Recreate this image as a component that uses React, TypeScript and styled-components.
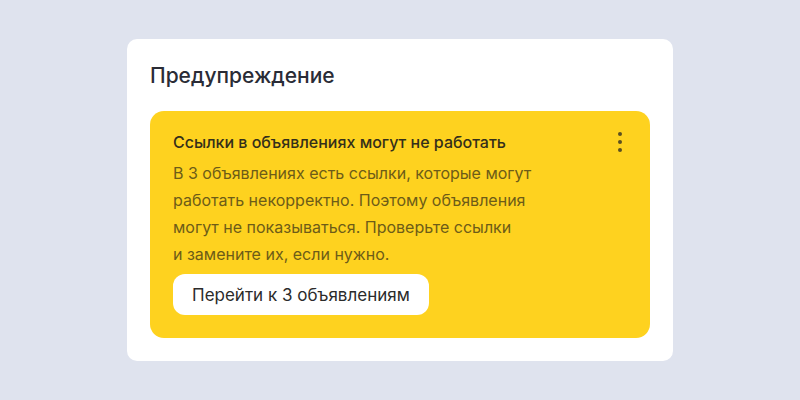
import styled, { createGlobalStyle } from 'styled-components';

const GlobalStyle = createGlobalStyle`
  html, body {
    margin: 0;
    padding: 0;
    background: #dfe3ee;
  }
  body {
    font-family: Inter, "Noto Sans", "Liberation Sans", sans-serif;
  }
`;

const Page = styled.div`
  height: 400px;
  display: flex;
  align-items: center;
  justify-content: center;
`;

const Card = styled.section`
  width: 546px;
  box-sizing: border-box;
  padding: 25px 23px 23px;
  background: #ffffff;
  border-radius: 10px;
`;

const Title = styled.h2`
  margin: 0 0 23px;
  font-size: 21px;
  line-height: 24px;
  font-weight: 500;
  color: #2a2c36;
`;

const Alert = styled.div`
  background: #fed21f;
  border-radius: 14px;
  padding: 19px 23px 23px;
`;

const AlertHead = styled.div`
  display: flex;
  align-items: center;
  justify-content: space-between;
  margin-bottom: 6px;
`;

const AlertTitle = styled.h3`
  margin: 0;
  font-size: 16px;
  line-height: 20px;
  font-weight: 500;
  color: #342f1a;
`;

const MenuButton = styled.button`
  width: 14px;
  height: 24px;
  padding: 0;
  border: none;
  background: none;
  display: flex;
  flex-direction: column;
  align-items: center;
  justify-content: center;
  gap: 4px;
  cursor: pointer;
`;

const Dot = styled.span`
  width: 4px;
  height: 4px;
  border-radius: 50%;
  background: #5c5020;
`;

const AlertText = styled.p`
  margin: 0 0 6px;
  font-size: 16px;
  line-height: 27px;
  color: #6d5c18;
`;

const ActionButton = styled.button`
  height: 41px;
  padding: 0 19px;
  border: none;
  border-radius: 12px;
  background: #ffffff;
  font-family: inherit;
  font-size: 17px;
  color: #2b2b2b;
  cursor: pointer;
`;

export default function App() {
  return (
    <>
      <GlobalStyle />
      <Page>
        <Card>
          <Title>Предупреждение</Title>
          <Alert>
            <AlertHead>
              <AlertTitle>Ссылки в объявлениях могут не работать</AlertTitle>
              <MenuButton aria-label="Меню">
                <Dot />
                <Dot />
                <Dot />
              </MenuButton>
            </AlertHead>
            <AlertText>
              В 3 объявлениях есть ссылки, которые могут
              <br />
              работать некорректно. Поэтому объявления
              <br />
              могут не показываться. Проверьте ссылки
              <br />
              и замените их, если нужно.
            </AlertText>
            <ActionButton>Перейти к 3 объявлениям</ActionButton>
          </Alert>
        </Card>
      </Page>
    </>
  );
}
